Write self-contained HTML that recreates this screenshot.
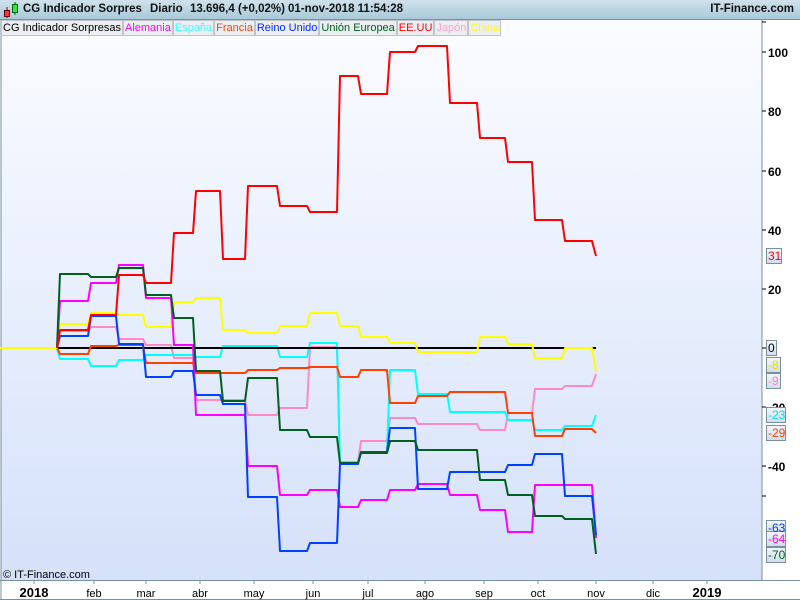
<!DOCTYPE html>
<html><head><meta charset="utf-8"><style>
body{margin:0;width:800px;height:600px;overflow:hidden;background:#fff;font-family:"Liberation Sans",sans-serif;position:relative}
#tb{position:absolute;left:0;top:0;width:800px;height:19px;background:linear-gradient(#cfe2ec,#a9c9d9);border-bottom:1px solid #7890a0}
#tb span{position:absolute;top:3px;font-size:11.5px;font-weight:bold;color:#111;white-space:pre}
#lg{position:absolute;left:1px;top:20px;height:16px;display:flex;font-size:11px}
#lg span{border:1px solid #c0c4c8;padding:0 1px;line-height:14px;background:#eceef2}
</style></head><body>
<svg width="800" height="600" style="position:absolute;left:0;top:0">
<defs><linearGradient id="g" x1="0" y1="0" x2="0" y2="1"><stop offset="0" stop-color="#fbfcff"/><stop offset="1" stop-color="#d5e1fa"/></linearGradient>
<linearGradient id="b" x1="0" y1="0" x2="0" y2="1"><stop offset="0" stop-color="#f4f7fc"/><stop offset="1" stop-color="#d0dcec"/></linearGradient></defs>
<rect x="1" y="20" width="761" height="560" fill="url(#g)"/>
<line x1="1" y1="20" x2="1" y2="600" stroke="#7890a0"/>
<line x1="762" y1="20" x2="762" y2="580" stroke="#7890a0"/>
<line x1="0" y1="580.5" x2="800" y2="580.5" stroke="#7890a0"/>
<line x1="0" y1="599.5" x2="800" y2="599.5" stroke="#7890a0"/>
<g stroke="#000"><line x1="762" y1="52" x2="766" y2="52"/><line x1="762" y1="111" x2="766" y2="111"/><line x1="762" y1="171" x2="766" y2="171"/><line x1="762" y1="230" x2="766" y2="230"/><line x1="762" y1="289" x2="766" y2="289"/><line x1="762" y1="348" x2="766" y2="348"/><line x1="762" y1="407" x2="766" y2="407"/><line x1="762" y1="466" x2="766" y2="466"/><line x1="762" y1="496" x2="766" y2="496"/><line x1="762" y1="22" x2="766" y2="22"/></g>
<g font-size="12" font-weight="bold" fill="#000"><text x="768" y="57">100</text><text x="768" y="116">80</text><text x="768" y="176">60</text><text x="768" y="235">40</text><text x="768" y="294">20</text><text x="768" y="412">-20</text><text x="768" y="471">-40</text></g>
<g stroke="#7890a0"><line x1="34" y1="580" x2="34" y2="584"/><line x1="94" y1="580" x2="94" y2="584"/><line x1="146" y1="580" x2="146" y2="584"/><line x1="200" y1="580" x2="200" y2="584"/><line x1="254" y1="580" x2="254" y2="584"/><line x1="313" y1="580" x2="313" y2="584"/><line x1="368" y1="580" x2="368" y2="584"/><line x1="425" y1="580" x2="425" y2="584"/><line x1="484" y1="580" x2="484" y2="584"/><line x1="538" y1="580" x2="538" y2="584"/><line x1="596" y1="580" x2="596" y2="584"/><line x1="653" y1="580" x2="653" y2="584"/><line x1="707" y1="580" x2="707" y2="584"/></g>
<g font-size="11" fill="#000" text-anchor="middle"><text x="34" y="597" font-weight="bold" font-size="13">2018</text><text x="94" y="597">feb</text><text x="146" y="597">mar</text><text x="200" y="597">abr</text><text x="254" y="597">may</text><text x="313" y="597">jun</text><text x="368" y="597">jul</text><text x="425" y="597">ago</text><text x="484" y="597">sep</text><text x="538" y="597">oct</text><text x="596" y="597">nov</text><text x="653" y="597">dic</text><text x="707" y="597" font-weight="bold" font-size="13">2019</text></g>
<text x="3" y="578" font-size="11" fill="#000">© IT-Finance.com</text>
<g fill="none" stroke-width="2" stroke-linejoin="round">
<polyline stroke="#ff80c0" opacity=".9" points="0,348 57,348 60,331 88,331 91,327 116,327 119,339 143,339 146,345 171,345 174,358 193,358 196,400 220,400 223,400 245,400 248,415 277,415 280,408 307,408 310,347 337,347 340,462 358,462 361,441 387,441 390,418 415,418 418,424 447,424 450,424 477,424 480,430 505,430 508,413 532,413 535,389 562,389 565,386 592,386 596,374"/>
<polyline stroke="#00ffff" points="0,348 57,348 60,359 88,359 91,366 116,366 119,360 143,360 146,355 171,355 174,355 193,355 196,357 220,357 223,346 245,346 248,346 277,346 280,357 307,357 310,343 337,343 340,463 358,463 361,452 387,452 390,370 415,370 418,394 447,394 450,412 477,412 480,412 505,412 508,420 532,420 535,430 562,430 565,426 592,426 596,415"/>
<polyline stroke="#000" points="57,348 596,348"/>
<polyline stroke="#ff4000" points="0,348 57,348 60,354 88,354 91,346 116,346 119,345 143,345 146,363 171,363 174,363 193,363 196,373 220,373 223,373 245,373 248,370 277,370 280,368 307,368 310,367 337,367 340,377 358,377 361,370 387,370 390,403 415,403 418,396 447,396 450,392 477,392 480,392 505,392 508,413 532,413 535,436 562,436 565,429 592,429 596,433"/>
<polyline stroke="#ffff00" points="0,348 57,348 60,324 88,324 91,313 116,313 119,315 143,315 146,327 171,327 174,302 193,302 196,298 220,298 223,330 245,330 248,333 277,333 280,326 307,326 310,313 337,313 340,326 358,326 361,337 387,337 390,343 415,343 418,352 447,352 450,352 477,352 480,337 505,337 508,344 532,344 535,358 562,358 565,348 592,348 596,372"/>
<polyline stroke="#ff00ff" points="57,348 60,301 88,301 91,283 116,283 119,265 143,265 146,298 171,298 174,345 193,345 196,415 220,415 223,415 245,415 248,466 277,466 280,495 307,495 310,490 337,490 340,507 358,507 361,500 387,500 390,490 415,490 418,484 447,484 450,495 477,495 480,510 505,510 508,532 532,532 535,485 562,485 565,485 592,485 596,538"/>
<polyline stroke="#0040ff" points="57,348 60,336 88,336 91,316 116,316 119,344 143,344 146,377 171,377 174,371 193,371 196,395 220,395 223,404 245,404 248,497 277,497 280,551 307,551 310,543 337,543 340,464 358,464 361,452 387,452 390,428 415,428 418,489 447,489 450,472 477,472 480,472 505,472 508,465 532,465 535,454 562,454 565,496 592,496 596,535"/>
<polyline stroke="#006020" points="57,348 60,274 88,274 91,277 116,277 119,268 143,268 146,295 171,295 174,318 193,318 196,371 220,371 223,401 245,401 248,378 277,378 280,430 307,430 310,437 337,437 340,463 358,463 361,453 387,453 390,441 415,441 418,450 447,450 450,450 477,450 480,480 505,480 508,495 532,495 535,516 562,516 565,519 592,519 596,554"/>
<polyline stroke="#ff0000" points="57,348 60,330 88,330 91,315 116,315 119,275 143,275 146,283 171,283 174,233 193,233 196,191 220,191 223,259 245,259 248,186 277,186 280,206 307,206 310,212 337,212 340,76 358,76 361,94 387,94 390,52 415,52 418,46 447,46 450,103 477,103 480,138 505,138 508,162 532,162 535,220 562,220 565,241 592,241 596,256"/>
</g>
<g stroke="#7890a0" stroke-width="1" fill="url(#b)">
<rect x="766.5" y="340.5" width="10" height="15"/>
<rect x="766.5" y="357.5" width="14" height="15"/>
<rect x="766.5" y="373.5" width="14" height="15"/>
<rect x="766.5" y="407.5" width="19" height="15"/>
<rect x="766.5" y="425.5" width="19" height="15"/>
<rect x="766.5" y="248.5" width="15" height="15"/>
<rect x="766.5" y="520.5" width="19" height="15"/>
<rect x="766.5" y="531.5" width="19" height="15"/>
<rect x="766.5" y="547.5" width="19" height="15"/>
</g>
<g font-size="12">
<text x="768" y="352" fill="#000">0</text>
<text x="768" y="369" fill="#e0e000">-8</text>
<text x="768" y="385" fill="#ff80c0">-9</text>
<text x="768" y="419" fill="#00e0e0">-23</text>
<text x="768" y="437" fill="#ff4000">-29</text>
<text x="768" y="260" fill="#ff0000">31</text>
<text x="768" y="532" fill="#0040ff">-63</text>
<text x="768" y="543" fill="#ff00ff">-64</text>
<text x="768" y="559" fill="#006020">-70</text>
</g>
</svg>
<div id="tb">
<svg width="18" height="18" style="position:absolute;left:2px;top:1px"><line x1="5" y1="6" x2="5" y2="17" stroke="#800"/><rect x="2.5" y="9.5" width="5" height="6" fill="#f04040" stroke="#600"/><line x1="13" y1="1" x2="13" y2="14" stroke="#060"/><rect x="10.5" y="3.5" width="5" height="8" fill="#40e040" stroke="#060"/></svg>
<span style="left:23px">CG Indicador Sorpres</span>
<span style="left:150px">Diario</span>
<span style="left:190px">13.696,4 (+0,02%)</span>
<span style="left:288px">01-nov-2018 11:54:28</span>
<span style="right:6px">IT-Finance.com</span>
</div>
<div id="lg"><span style="color:#000">CG Indicador Sorpresas</span><span style="color:#ff00ff">Alemania</span><span style="color:#40ffff">España</span><span style="color:#ff4000">Francia</span><span style="color:#0030ff">Reino Unido</span><span style="color:#006020">Unión Europea</span><span style="color:#ff0000">EE.UU</span><span style="color:#ffa0d0">Japón</span><span style="color:#ffff00">China</span></div>
</body></html>
